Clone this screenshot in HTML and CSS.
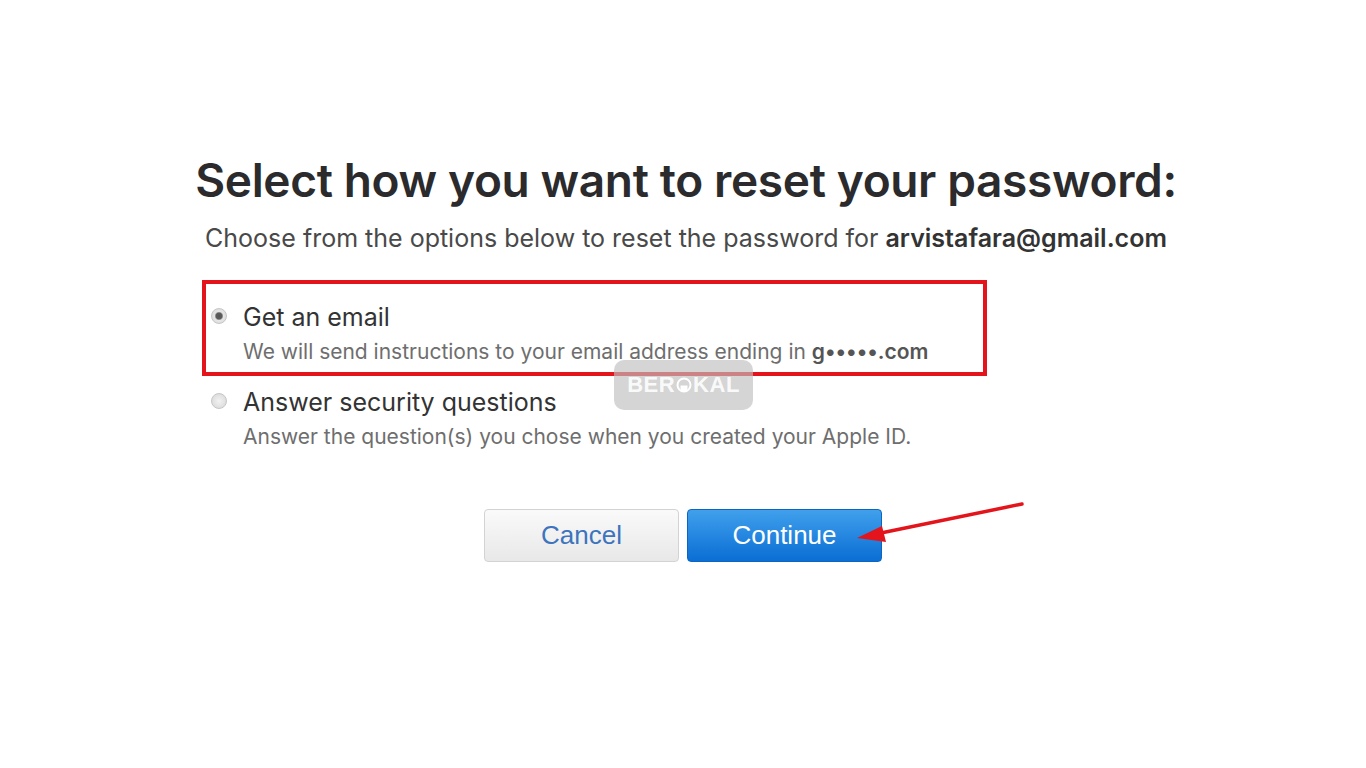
FILE: index.html
```html
<!DOCTYPE html>
<html lang="en">
<head>
    <meta charset="UTF-8">
    <meta name="viewport" content="width=device-width, initial-scale=1.0">
    <title>Reset your password</title>
    <link rel="stylesheet" href="styles.css">
</head>
<body>
    <main class="reset">
        <h1>Select how you want to reset your password:</h1>
        <p class="lead">Choose from the options below to reset the password for <strong>arvistafara@gmail.com</strong></p>

        <div class="options">
            <label class="option option-marked">
                <input type="radio" name="method" value="email" checked>
                <span class="option-text">
                    <span class="option-title">Get an email</span>
                    <span class="option-desc">We will send instructions to your email address ending in <strong>g&bull;&bull;&bull;&bull;&bull;.com</strong></span>
                </span>
            </label>
            <label class="option">
                <input type="radio" name="method" value="questions">
                <span class="option-text">
                    <span class="option-title">Answer security questions</span>
                    <span class="option-desc">Answer the question(s) you chose when you created your Apple ID.</span>
                </span>
            </label>
        </div>

        <div class="actions">
            <button class="btn btn-cancel">Cancel</button>
            <button class="btn btn-continue">Continue</button>
        </div>
    </main>

    <div class="watermark">BER<svg width="16" height="16" viewBox="0 0 16 16"><circle cx="8" cy="8" r="6.5" fill="none" stroke="#fff" stroke-width="2"/><path d="M4.5 8.5h7v2.5a3.5 3.5 0 0 1-7 0z" fill="#fff"/></svg>KAL</div>

    <svg class="arrow" width="170" height="50" viewBox="0 0 170 50">
        <line x1="166" y1="4" x2="20" y2="34" stroke="#e3141b" stroke-width="3.5" stroke-linecap="round"/>
        <polygon points="1,38 26,26 30,42" fill="#e3141b"/>
    </svg>
</body>
</html>
```

FILE: styles.css
```css
body {
    margin: 0;
    background-color: #fff;
    font-family: Inter, "Noto Sans", Arial, sans-serif;
    color: #333;
}
.reset {
    width: 990px;
    margin: 0 auto;
    padding-top: 151px;
}
h1 {
    margin: 0;
    font-size: 46px;
    line-height: 58px;
    font-weight: 600;
    letter-spacing: -0.35px;
    text-align: center;
    white-space: nowrap;
    color: #2b2b2d;
    padding-left: 6px;
}
.lead {
    margin: 14px 0 0;
    font-size: 25px;
    line-height: 30px;
    text-align: center;
    white-space: nowrap;
    color: #494949;
    padding-left: 6px;
}
.lead strong {
    font-weight: 600;
    color: #333;
}
.options {
    margin-top: 27px;
    padding-left: 14px;
}
.option {
    display: flex;
    align-items: flex-start;
    width: 785px;
    box-sizing: border-box;
    padding: 7px 0 0 13px;
    cursor: pointer;
}
.option-marked {
    border: 4px solid #e3141b;
    padding: 18px 0 7px 5px;
}
.option + .option {
    padding-top: 11px;
    padding-left: 9px;
}
.option input {
    appearance: none;
    width: 16px;
    height: 16px;
    margin: 6px 16px 0 0;
    border-radius: 50%;
    background: radial-gradient(circle, #f2f2f2 0, #d6d6d6 100%);
    border: 1px solid #c6c6c6;
    box-sizing: border-box;
    flex-shrink: 0;
}
.option input:checked {
    background: radial-gradient(circle, #555 0, #5d5d5d 3px, #e6e6e6 4.5px, #d6d6d6 100%);
}
.option-text {
    display: flex;
    flex-direction: column;
}
.option-title {
    font-size: 25px;
    line-height: 30px;
    color: #333;
}
.option-desc {
    margin-top: 7px;
    font-size: 21px;
    line-height: 26px;
    color: #6e6e6e;
}
.option-desc strong {
    font-weight: 600;
    color: #555;
}
.actions {
    display: flex;
    justify-content: center;
    gap: 8px;
    margin-top: 59px;
}
.btn {
    width: 195px;
    height: 53px;
    border-radius: 4px;
    font-family: "Liberation Sans", Arial, sans-serif;
    font-size: 26px;
    cursor: pointer;
}
.btn-cancel {
    background: linear-gradient(#fafafa, #e8e8e8);
    border: 1px solid #d3d3d3;
    color: #3c74bd;
}
.btn-continue {
    background: linear-gradient(#40a0ec, #0a6ed4);
    border: 1px solid #0b66c2;
    color: #fff;
}
.watermark {
    position: absolute;
    left: 614px;
    top: 360px;
    width: 139px;
    height: 50px;
    border-radius: 10px;
    background: rgba(190, 190, 190, 0.65);
    color: rgba(255, 255, 255, 0.9);
    font-family: "Liberation Sans", Arial, sans-serif;
    font-weight: 700;
    font-size: 22px;
    display: flex;
    align-items: center;
    justify-content: center;
    gap: 1px;
    letter-spacing: 0.5px;
}
.arrow {
    position: absolute;
    left: 856px;
    top: 500px;
}
```
